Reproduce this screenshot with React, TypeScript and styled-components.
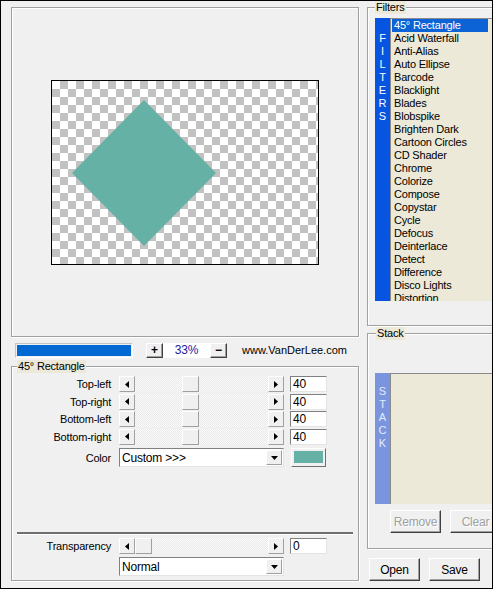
import React from 'react';
import styled, { createGlobalStyle } from 'styled-components';

const GlobalStyle = createGlobalStyle`
  html, body {
    margin: 0;
    padding: 0;
    background: #f0f0f0;
  }
  body {
    font-family: 'Liberation Sans', Arial, sans-serif;
    font-size: 11px;
    letter-spacing: -0.2px;
    color: #000;
  }
`;

const FILTERS = [
  '45° Rectangle',
  'Acid Waterfall',
  'Anti-Alias',
  'Auto Ellipse',
  'Barcode',
  'Blacklight',
  'Blades',
  'Blobspike',
  'Brighten Dark',
  'Cartoon Circles',
  'CD Shader',
  'Chrome',
  'Colorize',
  'Compose',
  'Copystar',
  'Cycle',
  'Defocus',
  'Deinterlace',
  'Detect',
  'Difference',
  'Disco Lights',
  'Distortion',
];

const CORNERS = [
  { label: 'Top-left', value: 40 },
  { label: 'Top-right', value: 40 },
  { label: 'Bottom-left', value: 40 },
  { label: 'Bottom-right', value: 40 },
];

const TEAL = '#66b1a5';

const Window = styled.div`
  width: 493px;
  height: 589px;
  box-sizing: border-box;
  border: 1px solid #000;
  background: #f0f0f0;
  display: flex;
  gap: 8px;
  padding-left: 10px;
  overflow: hidden;
`;

const LeftCol = styled.div`
  width: 348px;
  flex-shrink: 0;
  display: flex;
  flex-direction: column;
  padding-top: 6px;
`;

const RightCol = styled.div`
  width: 140px;
  flex-shrink: 0;
  display: flex;
  flex-direction: column;
`;

/* ---------- preview ---------- */

const Preview = styled.div`
  height: 330px;
  box-sizing: border-box;
  border: 1px solid #a0a0a0;
  box-shadow: inset 1px 1px #fff, 1px 1px #fff;
  display: flex;
  align-items: center;
  justify-content: center;
`;

const Canvas = styled.div`
  width: 268px;
  height: 185px;
  box-sizing: border-box;
  border: 1px solid #000;
  background: repeating-conic-gradient(#c2c2c2 0 25%, #fff 0 50%) 0 0 / 16px 16px;
  display: flex;
  svg {
    display: block;
  }
`;

/* ---------- zoom row ---------- */

const ZoomRow = styled.div`
  display: flex;
  align-items: center;
  height: 16px;
  margin-top: 5px;
`;

const Progress = styled.div`
  width: 118px;
  height: 15px;
  margin-left: 4px;
  box-sizing: border-box;
  border: 1px solid;
  border-color: #c4c4c4 #fff #fff #c4c4c4;
  padding: 1px;
  display: flex;
`;

const ProgressFill = styled.div`
  height: 100%;
  background: #0067d3;
`;

const SmallBtn = styled.div<{ $gap?: number }>`
  width: 17px;
  height: 15px;
  box-sizing: border-box;
  margin-left: ${p => p.$gap ?? 0}px;
  border: 1px solid;
  border-color: #fff #404040 #404040 #fff;
  box-shadow: inset -1px -1px #a0a0a0;
  background: #f0f0f0;
  display: flex;
  align-items: center;
  justify-content: center;
  font-weight: bold;
  font-size: 12px;
  line-height: 1;
`;

const ZoomValue = styled.div`
  width: 47px;
  height: 15px;
  background: #fff;
  color: #1c1ca0;
  font-size: 12px;
  display: flex;
  align-items: center;
  justify-content: center;
`;

const SiteLink = styled.span`
  margin-left: 15px;
  font-size: 11px;
  letter-spacing: 0;
`;

/* ---------- group boxes ---------- */

const Group = styled.fieldset<{ $gapTop?: number }>`
  margin: ${p => p.$gapTop ?? 0}px 0 0 0;
  padding: 0;
  min-width: 0;
  border: 1px solid #a0a0a0;
  box-shadow: inset 1px 1px #fff, 1px 1px #fff;
`;

const Legend = styled.legend<{ $indent: number }>`
  margin-left: ${p => p.$indent}px;
  padding: 0 1px;
  background: #ece9d8;
  line-height: 13px;
  font-size: 11px;
`;

const GroupBody = styled.div`
  height: 207px;
  display: flex;
  flex-direction: column;
  padding: 3px 5px 4px;
  box-sizing: border-box;
`;

const Row = styled.div<{ $mt?: number; $h?: number }>`
  display: flex;
  align-items: center;
  height: ${p => p.$h ?? 16}px;
  margin-top: ${p => p.$mt ?? 0}px;
  flex-shrink: 0;
`;

const Label = styled.span`
  width: 94px;
  margin-right: 8px;
  text-align: right;
  white-space: nowrap;
`;

const Spacer = styled.div`
  flex: 1;
`;

const Separator = styled.div`
  height: 2px;
  background: #6f6f6f;
  border-bottom: 1px solid #fff;
  flex-shrink: 0;
`;

/* ---------- scroll bar ---------- */

const ScrollBar = styled.div`
  width: 165px;
  height: 16px;
  display: flex;
`;

const ArrowBtn = styled.div`
  width: 16px;
  height: 16px;
  box-sizing: border-box;
  flex-shrink: 0;
  border: 1px solid;
  border-color: #fff #a0a0a0 #a0a0a0 #fff;
  background: #f0f0f0;
  display: flex;
  align-items: center;
  justify-content: center;
`;

const Track = styled.div`
  flex: 1;
  display: flex;
  background: repeating-conic-gradient(#fbfbfb 0 25%, #e9e9e9 0 50%) 0 0 / 2px 2px;
`;

const Thumb = styled.div`
  width: 17px;
  height: 16px;
  box-sizing: border-box;
  border: 1px solid;
  border-color: #fff #a0a0a0 #a0a0a0 #fff;
  background: #f0f0f0;
`;

const NumBox = styled.div`
  width: 37px;
  height: 16px;
  margin-left: 6px;
  box-sizing: border-box;
  background: #fff;
  border: 1px solid;
  border-color: #808080 #e4e4e4 #e4e4e4 #808080;
  padding-left: 2px;
  line-height: 14px;
  font-size: 12px;
`;

/* ---------- combo ---------- */

const Combo = styled.div<{ $ml?: number }>`
  width: 165px;
  height: 19px;
  margin-left: ${p => p.$ml ?? 0}px;
  box-sizing: border-box;
  background: #fff;
  border: 1px solid;
  border-color: #808080 #e4e4e4 #e4e4e4 #808080;
  display: flex;
  align-items: center;
`;

const ComboText = styled.span`
  flex: 1;
  padding-left: 2px;
  font-size: 12px;
`;

const ComboBtn = styled(ArrowBtn)`
  height: 15px;
  margin-right: 1px;
`;

const Swatch = styled.div`
  width: 35px;
  height: 19px;
  margin-left: 7px;
  box-sizing: border-box;
  border: 1px solid;
  border-color: #fff #707070 #707070 #fff;
  padding: 2px 2px 3px;
  display: flex;
`;

const SwatchFill = styled.div`
  flex: 1;
  background: ${TEAL};
`;

/* ---------- right side lists ---------- */

const FiltersBody = styled.div`
  height: 311px;
  padding: 4px 0 0 7px;
  box-sizing: border-box;
`;

const ListFrame = styled.div<{ $h: number }>`
  height: ${p => p.$h}px;
  display: flex;
`;

const SideBar = styled.div<{ $bg: string; $fg: string; $pt: number }>`
  width: 15px;
  flex-shrink: 0;
  background: ${p => p.$bg};
  color: ${p => p.$fg};
  padding-top: ${p => p.$pt}px;
  box-sizing: border-box;
  display: flex;
  flex-direction: column;
  align-items: center;
  font-size: 11px;
  line-height: 13px;
  letter-spacing: 0;
`;

const ListBox = styled.div`
  flex: 1;
  background: #ece9d8;
  border-top: 1px solid #8a8a8a;
  border-left: 1px solid #8a8a8a;
  overflow: hidden;
`;

const Item = styled.div<{ $selected?: boolean }>`
  width: 96px;
  height: 13px;
  margin-left: 1px;
  padding-left: 2px;
  box-sizing: border-box;
  line-height: 13px;
  font-size: 11px;
  white-space: nowrap;
  background: ${p => (p.$selected ? '#0b63d6' : 'transparent')};
  color: ${p => (p.$selected ? '#fff' : '#000')};
`;

const StackBody = styled.div`
  height: 208px;
  padding: 33px 0 0 7px;
  box-sizing: border-box;
`;

const StackButtons = styled.div`
  display: flex;
  gap: 9px;
  margin: 6px 0 0 15px;
`;

const Button = styled.div<{ $disabled?: boolean }>`
  width: 51px;
  height: 23px;
  flex-shrink: 0;
  box-sizing: border-box;
  border: 1px solid;
  border-color: #fff #404040 #404040 #fff;
  box-shadow: inset -1px -1px #a0a0a0;
  background: #f0f0f0;
  display: flex;
  align-items: center;
  justify-content: center;
  font-size: 12px;
  color: ${p => (p.$disabled ? '#a0a0a0' : '#000')};
  text-shadow: ${p => (p.$disabled ? '1px 1px #fff' : 'none')};
`;

const FooterButtons = styled.div`
  display: flex;
  gap: 9px;
  margin: 9px 0 0 2px;
`;

/* ---------- parts ---------- */

const Arrow: React.FC<{ dir: 'left' | 'right' | 'down' }> = ({ dir }) => {
  if (dir === 'down') {
    return (
      <svg width="7" height="4" viewBox="0 0 7 4">
        <polygon points="0,0 7,0 3.5,4" fill="#000" />
      </svg>
    );
  }
  return (
    <svg width="4" height="7" viewBox="0 0 4 7">
      <polygon points={dir === 'left' ? '4,0 4,7 0,3.5' : '0,0 0,7 4,3.5'} fill="#000" />
    </svg>
  );
};

const Slider: React.FC<{ value: number }> = ({ value }) => (
  <ScrollBar>
    <ArrowBtn><Arrow dir="left" /></ArrowBtn>
    <Track>
      <Thumb style={{ marginLeft: Math.round((value / 100) * 117) }} />
    </Track>
    <ArrowBtn><Arrow dir="right" /></ArrowBtn>
  </ScrollBar>
);

const DropDown: React.FC<{ text: string; ml?: number }> = ({ text, ml }) => (
  <Combo $ml={ml}>
    <ComboText>{text}</ComboText>
    <ComboBtn><Arrow dir="down" /></ComboBtn>
  </Combo>
);

const App: React.FC = () => (
  <>
    <GlobalStyle />
    <Window>
      <LeftCol>
        <Preview>
          <Canvas>
            <svg width="266" height="183" viewBox="0 0 266 183">
              <polygon points="92,19 164,92 92,165 20,92" fill={TEAL} />
            </svg>
          </Canvas>
        </Preview>

        <ZoomRow>
          <Progress>
            <ProgressFill style={{ width: '100%' }} />
          </Progress>
          <SmallBtn $gap={13}>+</SmallBtn>
          <ZoomValue>33%</ZoomValue>
          <SmallBtn>−</SmallBtn>
          <SiteLink>www.VanDerLee.com</SiteLink>
        </ZoomRow>

        <Group $gapTop={2}>
          <Legend $indent={5}>45° Rectangle</Legend>
          <GroupBody>
            {CORNERS.map((c, i) => (
              <Row key={c.label} $mt={i === 0 ? 0 : 1.5}>
                <Label>{c.label}</Label>
                <Slider value={c.value} />
                <NumBox>{c.value}</NumBox>
              </Row>
            ))}
            <Row $mt={3.5} $h={19}>
              <Label>Color</Label>
              <DropDown text="Custom >>>" />
              <Swatch><SwatchFill /></Swatch>
            </Row>
            <Spacer />
            <Separator />
            <Row $mt={3}>
              <Label>Transparency</Label>
              <Slider value={0} />
              <NumBox>0</NumBox>
            </Row>
            <Row $mt={3} $h={19}>
              <DropDown text="Normal" ml={102} />
            </Row>
          </GroupBody>
        </Group>
      </LeftCol>

      <RightCol>
        <Group>
          <Legend $indent={7}>Filters</Legend>
          <FiltersBody>
            <ListFrame $h={283}>
              <SideBar $bg="#0654e0" $fg="#fff" $pt={14}>
                {'FILTERS'.split('').map((ch, i) => <span key={i}>{ch}</span>)}
              </SideBar>
              <ListBox>
                {FILTERS.map((f, i) => (
                  <Item key={f} $selected={i === 0}>{f}</Item>
                ))}
              </ListBox>
            </ListFrame>
          </FiltersBody>
        </Group>

        <Group $gapTop={1}>
          <Legend $indent={8}>Stack</Legend>
          <StackBody>
            <ListFrame $h={131}>
              <SideBar $bg="#7a95de" $fg="#e6ebfb" $pt={12}>
                {'STACK'.split('').map((ch, i) => <span key={i}>{ch}</span>)}
              </SideBar>
              <ListBox />
            </ListFrame>
            <StackButtons>
              <Button $disabled>Remove</Button>
              <Button $disabled>Clear</Button>
            </StackButtons>
          </StackBody>
        </Group>

        <FooterButtons>
          <Button>Open</Button>
          <Button>Save</Button>
        </FooterButtons>
      </RightCol>
    </Window>
  </>
);

export default App;
